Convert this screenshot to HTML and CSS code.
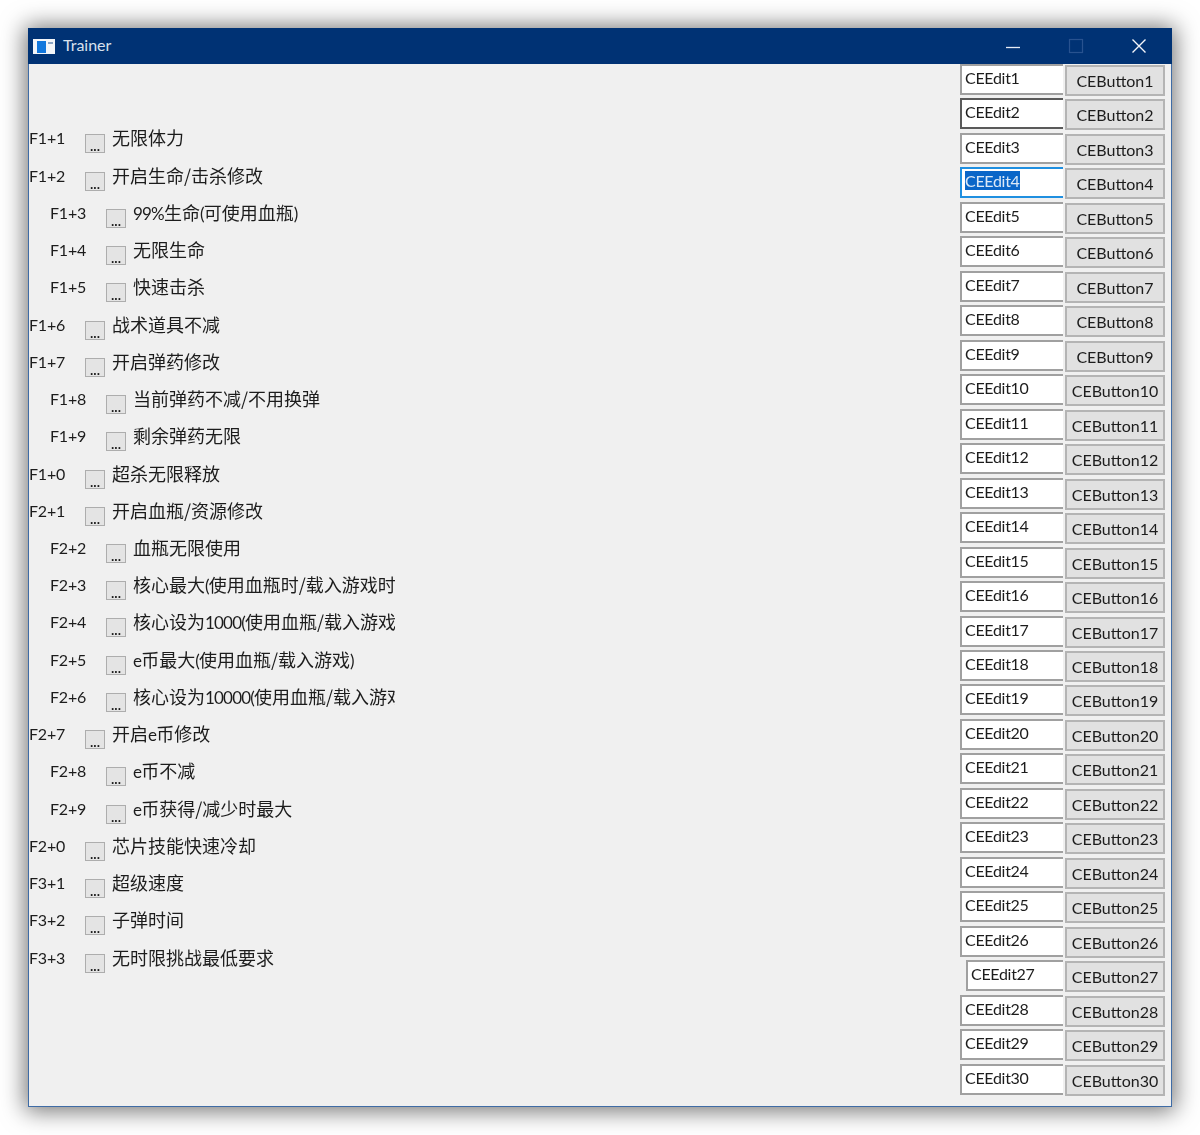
FILE: index.html
```html
<!DOCTYPE html>
<html lang="zh">
<head>
<meta charset="utf-8">
<title>Trainer</title>
<link rel="stylesheet" href="styles.css">
</head>
<body>
<div class="window">
  <header class="titlebar">
    <svg class="app-icon" width="22" height="15" viewBox="0 0 22 15"><rect width="22" height="15" fill="#f2f5f9"/><rect x="4" y="2" width="9" height="12" fill="#1177dd"/><rect x="15" y="3" width="5" height="2" fill="#8aa4c4"/></svg>
    <span class="title">Trainer</span>
    <div class="controls">
      <svg class="ctl" width="16" height="16" viewBox="0 0 16 16"><path d="M1 9.5h14" stroke="#e6ecf5" stroke-width="1.3"/></svg>
      <svg class="ctl" width="16" height="16" viewBox="0 0 16 16"><rect x="1.5" y="1.5" width="13" height="13" fill="none" stroke="#28528f" stroke-width="1.2"/></svg>
      <svg class="ctl" width="16" height="16" viewBox="0 0 16 16"><path d="M1.5 1.5l13 13M14.5 1.5l-13 13" stroke="#f4f6fa" stroke-width="1.4"/></svg>
    </div>
  </header>
  <main class="content">
    <section class="list">
      <div class="row"><span class="key">F1+1</span><span class="check">...</span><span class="text">无限体力</span></div>
      <div class="row"><span class="key">F1+2</span><span class="check">...</span><span class="text">开启生命/击杀修改</span></div>
      <div class="row sub"><span class="key">F1+3</span><span class="check">...</span><span class="text"><i>99%</i>生命<i>(</i>可使用血瓶<i>)</i></span></div>
      <div class="row sub"><span class="key">F1+4</span><span class="check">...</span><span class="text">无限生命</span></div>
      <div class="row sub"><span class="key">F1+5</span><span class="check">...</span><span class="text">快速击杀</span></div>
      <div class="row"><span class="key">F1+6</span><span class="check">...</span><span class="text">战术道具不减</span></div>
      <div class="row"><span class="key">F1+7</span><span class="check">...</span><span class="text">开启弹药修改</span></div>
      <div class="row sub"><span class="key">F1+8</span><span class="check">...</span><span class="text">当前弹药不减/不用换弹</span></div>
      <div class="row sub"><span class="key">F1+9</span><span class="check">...</span><span class="text">剩余弹药无限</span></div>
      <div class="row"><span class="key">F1+0</span><span class="check">...</span><span class="text">超杀无限释放</span></div>
      <div class="row"><span class="key">F2+1</span><span class="check">...</span><span class="text">开启血瓶/资源修改</span></div>
      <div class="row sub"><span class="key">F2+2</span><span class="check">...</span><span class="text">血瓶无限使用</span></div>
      <div class="row sub"><span class="key">F2+3</span><span class="check">...</span><span class="text">核心最大<i>(</i>使用血瓶时/载入游戏时<i>)</i></span></div>
      <div class="row sub"><span class="key">F2+4</span><span class="check">...</span><span class="text">核心设为<i>1000(</i>使用血瓶/载入游戏<i>)</i></span></div>
      <div class="row sub"><span class="key">F2+5</span><span class="check">...</span><span class="text"><i>e</i>币最大<i>(</i>使用血瓶/载入游戏<i>)</i></span></div>
      <div class="row sub"><span class="key">F2+6</span><span class="check">...</span><span class="text">核心设为<i>10000(</i>使用血瓶/载入游戏<i>)</i></span></div>
      <div class="row"><span class="key">F2+7</span><span class="check">...</span><span class="text">开启<i>e</i>币修改</span></div>
      <div class="row sub"><span class="key">F2+8</span><span class="check">...</span><span class="text"><i>e</i>币不减</span></div>
      <div class="row sub"><span class="key">F2+9</span><span class="check">...</span><span class="text"><i>e</i>币获得/减少时最大</span></div>
      <div class="row"><span class="key">F2+0</span><span class="check">...</span><span class="text">芯片技能快速冷却</span></div>
      <div class="row"><span class="key">F3+1</span><span class="check">...</span><span class="text">超级速度</span></div>
      <div class="row"><span class="key">F3+2</span><span class="check">...</span><span class="text">子弹时间</span></div>
      <div class="row"><span class="key">F3+3</span><span class="check">...</span><span class="text">无时限挑战最低要求</span></div>
    </section>
    <section class="side">
      <div class="edit">CEEdit1</div><button class="btn">CEButton1</button>
      <div class="edit dark">CEEdit2</div><button class="btn">CEButton2</button>
      <div class="edit">CEEdit3</div><button class="btn">CEButton3</button>
      <div class="edit focus"><span class="sel">CEEdit4</span></div><button class="btn">CEButton4</button>
      <div class="edit">CEEdit5</div><button class="btn">CEButton5</button>
      <div class="edit">CEEdit6</div><button class="btn">CEButton6</button>
      <div class="edit">CEEdit7</div><button class="btn">CEButton7</button>
      <div class="edit">CEEdit8</div><button class="btn">CEButton8</button>
      <div class="edit">CEEdit9</div><button class="btn">CEButton9</button>
      <div class="edit">CEEdit10</div><button class="btn">CEButton10</button>
      <div class="edit">CEEdit11</div><button class="btn">CEButton11</button>
      <div class="edit">CEEdit12</div><button class="btn">CEButton12</button>
      <div class="edit">CEEdit13</div><button class="btn">CEButton13</button>
      <div class="edit">CEEdit14</div><button class="btn">CEButton14</button>
      <div class="edit">CEEdit15</div><button class="btn">CEButton15</button>
      <div class="edit">CEEdit16</div><button class="btn">CEButton16</button>
      <div class="edit">CEEdit17</div><button class="btn">CEButton17</button>
      <div class="edit">CEEdit18</div><button class="btn">CEButton18</button>
      <div class="edit">CEEdit19</div><button class="btn">CEButton19</button>
      <div class="edit">CEEdit20</div><button class="btn">CEButton20</button>
      <div class="edit">CEEdit21</div><button class="btn">CEButton21</button>
      <div class="edit">CEEdit22</div><button class="btn">CEButton22</button>
      <div class="edit">CEEdit23</div><button class="btn">CEButton23</button>
      <div class="edit">CEEdit24</div><button class="btn">CEButton24</button>
      <div class="edit">CEEdit25</div><button class="btn">CEButton25</button>
      <div class="edit">CEEdit26</div><button class="btn">CEButton26</button>
      <div class="edit indent">CEEdit27</div><button class="btn">CEButton27</button>
      <div class="edit">CEEdit28</div><button class="btn">CEButton28</button>
      <div class="edit">CEEdit29</div><button class="btn">CEButton29</button>
      <div class="edit">CEEdit30</div><button class="btn">CEButton30</button>
    </section>
  </main>
</div>
</body>
</html>
```
FILE: styles.css
```css
html, body { margin: 0; background: #fff; }
body { padding: 28px 28px 28px; height: 1079px; }
.window {
  height: 1079px;
  display: flex;
  flex-direction: column;
  background: #f0f0f0;
  border: 1px solid #3f6ca6;
  border-top: 0;
  box-sizing: border-box;
  box-shadow: 0 1px 22px 3px rgba(0, 0, 0, .55);
  color: #1c1c1c;
  font: 17px Lato, "Noto Sans CJK SC", sans-serif;
  filter: blur(.35px);
}
.titlebar {
  height: 36px;
  flex: none;
  margin: 0 -1px;
  background: #003274;
  display: flex;
  align-items: center;
  padding-left: 5px;
}
.app-icon { margin-right: 8px; }
.title { color: #d9e1ed; font-size: 16px; margin-top: -3px; }
.controls { margin-left: auto; margin-right: 25px; display: flex; gap: 47px; }
.ctl { display: block; }
.content { flex: 1; display: flex; justify-content: space-between; min-height: 0; }
.list { width: 366px; padding-top: 56.4px; display: grid; grid-auto-rows: 37.24px; align-content: start; }
.row { display: flex; align-items: flex-start; white-space: nowrap; overflow: hidden; line-height: 36px; }
.row.sub { padding-left: 21px; }
.key { width: 56px; flex: none; font-size: 16px; letter-spacing: -.2px; }
.check {
  width: 20px; height: 19px; flex: none; margin-top: 14px; margin-right: 7px;
  box-sizing: border-box; border: 1px solid #adadad; background: #e4e4e4;
  font: bold 12px/24px "Liberation Sans", sans-serif; text-align: center; overflow: hidden;
}
.text { font-size: 18px; font-family: "Noto Sans CJK SC", sans-serif; line-height: 35px; }
.text i { font: 17px Lato, sans-serif; letter-spacing: -.8px; }
.side {
  display: grid;
  grid-template-columns: 103px 100px;
  column-gap: 2px;
  grid-auto-rows: 34.47px;
  margin-right: 6px;
  align-content: start;
}
.edit {
  height: 31px; box-sizing: border-box;
  background: #fff;
  border: 2px solid #a0a0a0; border-right: 0;
  padding-left: 3px;
  font-size: 16px; line-height: 24px;
  letter-spacing: -.3px;
}
.edit.dark { border-color: #5a5a5a; }
.edit.focus { border-color: #1f8fe0; }
.edit.indent { margin-left: 6px; }
.edit .sel { background: #0a66c8; color: #dce9f7; }
.btn {
  height: 31px; margin-top: 1px; padding: 0;
  box-sizing: border-box;
  background: #e1e1e1;
  border: 2px solid #b4b4b4;
  color: #1c1c1c;
  font: 16px Lato, sans-serif;
  text-align: center;
}
```
